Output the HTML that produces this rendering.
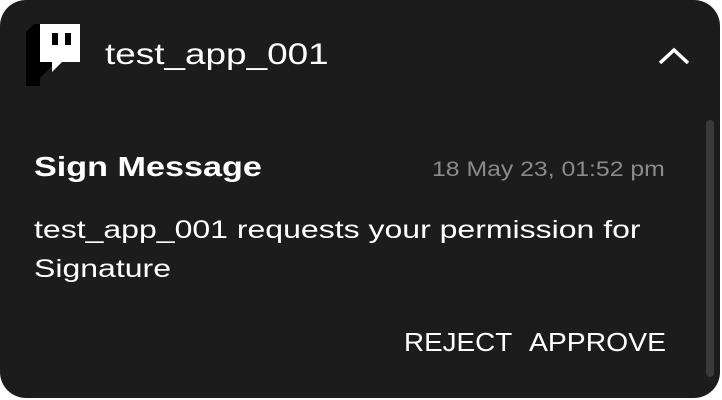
<!DOCTYPE html>
<html><head><style>
body{margin:0;width:722px;height:400px;background:#fff;overflow:hidden;font-family:"Liberation Sans",sans-serif}
.card{position:absolute;left:0;top:0;width:720px;height:398px;background:#1c1c1c;border-radius:26px;color:#fff}
.t{position:absolute;white-space:nowrap;transform-origin:0 0}
</style></head><body>
<div class="card">
<svg class="t" style="left:26px;top:24px" width="56" height="64" viewBox="0 0 56 64">
<path d="M0 8 L8 0 L54 0 L54 38 L30 38 L14 54 L14 62 L0 62 Z" fill="#000"/>
<path d="M14 0 H54 V38 H36 L26 48 V38 H14 Z" fill="#fff"/>
<rect x="26" y="9" width="6" height="12" fill="#000"/>
<rect x="39" y="9" width="6" height="12" fill="#000"/>
</svg>
<div class="t" style="left:105px;top:38px;font-size:30px;transform:scaleX(1.23)">test_app_001</div>
<svg class="t" style="left:657px;top:46px" width="34" height="20"><path d="M3 17 L17 4 L31 17" stroke="#fff" stroke-width="3.5" fill="none"/></svg>
<div class="t" style="left:706px;top:120px;width:8px;height:257px;border-radius:4px;background:#3a3a3a"></div>
<div class="t" style="left:34px;top:151px;font-size:28px;font-weight:bold;transform:scaleX(1.22)">Sign Message</div>
<div class="t" style="left:432px;top:158px;font-size:21px;color:#8a8a8a;transform:scaleX(1.18)">18 May 23, 01:52 pm</div>
<div class="t" style="left:34px;top:211px;font-size:25px;line-height:39px;transform:scaleX(1.28)">test_app_001 requests your permission for<br>Signature</div>
<div class="t" style="left:404px;top:327px;font-size:26px;transform:scaleX(1.07)">REJECT</div>
<div class="t" style="left:529px;top:327px;font-size:26px;transform:scaleX(1.09)">APPROVE</div>
</div>
</body></html>
